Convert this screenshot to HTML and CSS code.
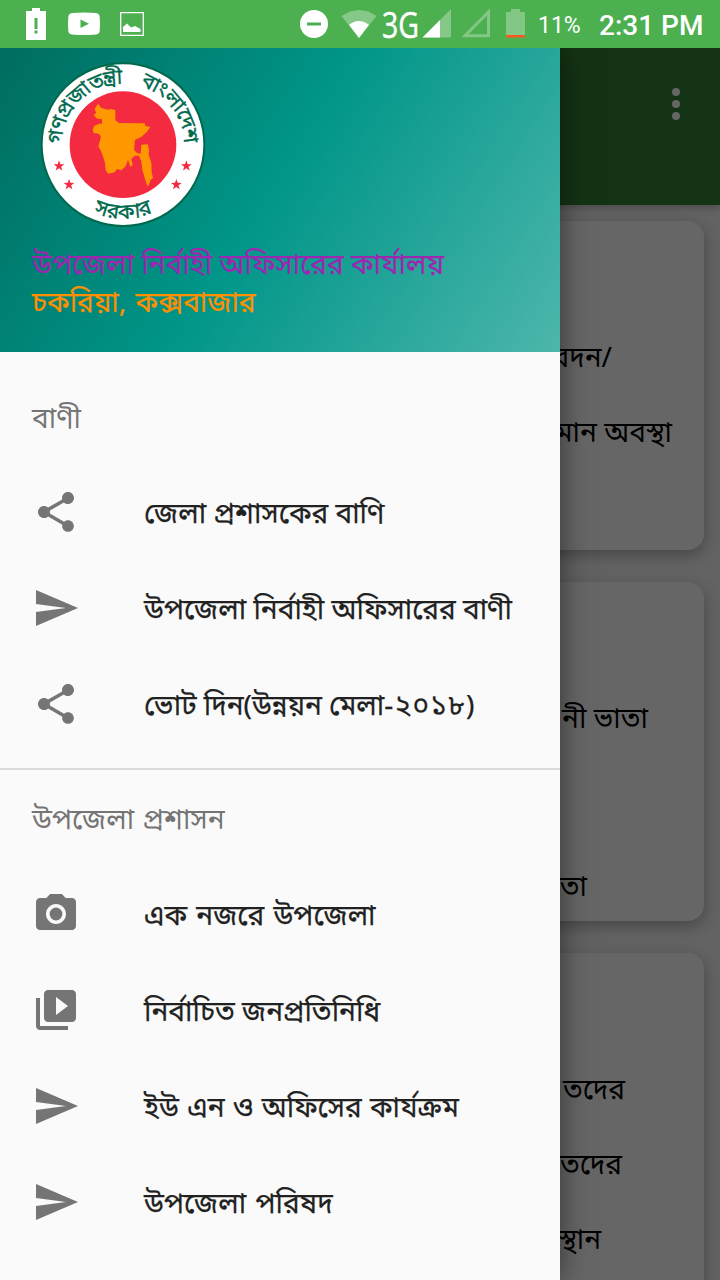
FILE: index.html
```html
<!DOCTYPE html>
<html lang="bn">
<head>
<meta charset="utf-8">
<title>উপজেলা নির্বাহী অফিসারের কার্যালয়</title>
<link rel="stylesheet" href="styles.css">
</head>
<body>
<svg class="defs" aria-hidden="true">
  <symbol id="share" viewBox="0 0 24 24"><path d="M18 16.08c-.76 0-1.44.3-1.96.77L8.91 12.7c.05-.23.09-.46.09-.7s-.04-.47-.09-.7l7.05-4.11c.54.5 1.25.81 2.04.81 1.66 0 3-1.34 3-3s-1.34-3-3-3-3 1.34-3 3c0 .24.04.47.09.7L8.04 9.81C7.5 9.31 6.79 9 6 9c-1.66 0-3 1.34-3 3s1.34 3 3 3c.79 0 1.5-.31 2.04-.81l7.12 4.16c-.05.21-.08.43-.08.65 0 1.61 1.31 2.92 2.92 2.92s2.92-1.31 2.92-2.92-1.31-2.92-2.92-2.92z"/></symbol>
  <symbol id="send" viewBox="0 0 24 24"><path d="M2.01 21L23 12 2.01 3 2 10l15 2-15 2z"/></symbol>
  <symbol id="camera" viewBox="0 0 24 24"><circle cx="12" cy="12" r="3.2"/><path d="M9 2L7.17 4H4c-1.1 0-2 .9-2 2v12c0 1.1.9 2 2 2h16c1.1 0 2-.9 2-2V6c0-1.1-.9-2-2-2h-3.17L15 2H9zm3 15c-2.76 0-5-2.24-5-5s2.24-5 5-5 5 2.24 5 5-2.24 5-5 5z"/></symbol>
  <symbol id="slideshow" viewBox="0 0 24 24"><path d="M4 6H2v14c0 1.1.9 2 2 2h14v-2H4V6zm16-4H8c-1.1 0-2 .9-2 2v12c0 1.1.9 2 2 2h12c1.1 0 2-.9 2-2V4c0-1.1-.9-2-2-2zm-8 12.5v-9l6 4.5-6 4.5z"/></symbol>
  <symbol id="star" viewBox="-10 -10 20 20"><path d="M0-10 2.4-3.2 9.5-3.1 3.8 1.2 5.9 8.1 0 4-5.9 8.1-3.8 1.2-9.5-3.1-2.4-3.2z"/></symbol>
</svg>
<div class="screen">
  <header class="status">
    <svg class="status-icons" width="150" height="48" viewBox="0 0 150 48">
      <path fill="#fff" fill-rule="evenodd" d="M32 8h8v3h6v29H26V11h6zM34.500 18v11h3V18zm0 12.500v3h3v-3z"/>
      <path fill="#fff" fill-rule="evenodd" d="M72 13q12-1 24 0 3.500.5 3.700 4 .6 7 0 14-.3 3-3.700 3.500-12 1-24 0-3.500-.5-3.700-3.500-.6-7 0-14 .3-3.500 3.700-4zm8.500 6.500v8.500l8.500-4.200z"/>
      <path fill="none" stroke="#fff" stroke-width="1.300" d="M120.700 12.700h22.600v22.600h-22.600z"/>
      <path fill="#fff" d="M123 32v-5l4-3.500 4 4 4-1.500 5.500 3v3z"/>
    </svg>
    <div class="status-right">
      <svg width="240" height="48" viewBox="290 0 240 48">
        <circle cx="314" cy="24" r="14" fill="#fff"/><path d="M307 22.500h14v3h-14z" fill="#4caf50"/>
        <path d="M359 38 341.500 16Q359 4 376.500 16z" fill="#fff" opacity=".32"/>
        <path d="M359 38 349 24.800Q359 17 369 24.800z" fill="#fff"/>
        <text class="network" x="382" y="38" textLength="37" lengthAdjust="spacingAndGlyphs">3G</text>
        <path d="M422.500 37.500 451 9v28.500z" fill="#fff" opacity=".32"/><path d="M422.500 37.500 440 20v17.500z" fill="#fff"/>
        <path d="M465 35.700 488.500 12v23.700z" fill="none" stroke="#83c785" stroke-width="3"/>
        <path d="M511 9h9v3h5v25h-19V12h5z" fill="#83c785"/><path d="M506 35h19v2.500h-19z" fill="#ff5722"/>
      </svg>
      <span class="battery">11%</span>
      <span class="clock">2:31 PM</span>
    </div>
  </header>
  <main class="content">
    <div class="appbar">
      <svg width="12" height="34" viewBox="0 0 12 34" fill="#666"><circle cx="6" cy="5" r="4"/><circle cx="6" cy="17" r="4"/><circle cx="6" cy="29" r="4"/></svg>
    </div>
    <div class="cards">
      <section class="card card-a"><p class="end-a1">আবেদন/</p><p class="end-a2">বর্তমান অবস্থা</p></section>
      <section class="card card-b"><p class="end-b1">নী ভাতা</p><p class="end-b2">ভাতা</p></section>
      <section class="card card-c"><p class="end-c1">তদের</p><p class="end-c2">তদের</p><p class="end-c3">স্থান</p></section>
    </div>
  </main>
  <aside class="drawer">
    <div class="profile">
      <svg class="emblem" width="166" height="166" viewBox="31 37 498 498">
        <defs>
          <path id="arc-top" d="M97 285A183 183 0 0 1 463 285"/>
          <path id="arc-bottom" d="M120 439A222 222 0 0 0 440 439"/>
        </defs>
        <circle cx="280" cy="285" r="244" fill="#fff" stroke="#00694d" stroke-width="6"/>
        <circle cx="280" cy="285" r="160" fill="#f42a41"/>
        <path fill="#ff9800" d="M205 162 215 175 235 180 245 178 257 182 257 212 268 220 345 221 347 229 362 232 352 246 335 262 316 270 313 300 322 310 333 312 335 285 354 284 358 300 357 315 365 340 366 368 370 385 363 390 355 411 350 400 345 385 338 360 335 335 327 318 315 318 305 328 309 345 302 352 295 330 288 350 275 362 262 358 255 368 236 372 228 362 226 340 220 320 212 300 206 290 214 262 208 252 192 250 189 240 194 228 208 222 218 222 216 208 202 207 192 196 200 190 195 178z"/>
        <g fill="#f42a41"><use href="#star" x="71" y="332" width="34" height="34"/><use href="#star" x="101" y="388" width="34" height="34"/><use href="#star" x="453" y="332" width="34" height="34"/><use href="#star" x="423" y="388" width="34" height="34"/></g>
        <text class="seal"><textPath href="#arc-top" startOffset="2" textLength="284">গণপ্রজাতন্ত্রী</textPath></text>
        <text class="seal"><textPath href="#arc-top" startOffset="333" textLength="236">বাংলাদেশ</textPath></text>
        <text class="seal" text-anchor="middle"><textPath href="#arc-bottom" startOffset="50%">সরকার</textPath></text>
      </svg>
      <h1 class="office">উপজেলা নির্বাহী অফিসারের কার্যালয়</h1>
      <p class="place">চকরিয়া, কক্সবাজার</p>
    </div>
    <nav class="menu">
      <h2 class="group">বাণী</h2>
      <a class="item"><svg><use href="#share"/></svg><span>জেলা প্রশাসকের বাণি</span></a>
      <a class="item"><svg><use href="#send"/></svg><span>উপজেলা নির্বাহী অফিসারের বাণী</span></a>
      <a class="item"><svg><use href="#share"/></svg><span>ভোট দিন(উন্নয়ন মেলা<b class="year">-২০১৮)</b></span></a>
      <h2 class="group divided">উপজেলা প্রশাসন</h2>
      <a class="item wide"><svg><use href="#camera"/></svg><span>এক নজরে উপজেলা</span></a>
      <a class="item"><svg><use href="#slideshow"/></svg><span>নির্বাচিত জনপ্রতিনিধি</span></a>
      <a class="item roomy"><svg><use href="#send"/></svg><span>ইউ এন ও অফিসের কার্যক্রম</span></a>
      <a class="item wide"><svg><use href="#send"/></svg><span>উপজেলা পরিষদ</span></a>
    </nav>
  </aside>
</div>
</body>
</html>
```
FILE: styles.css
```css
* { box-sizing: border-box; margin: 0; padding: 0; }
body { font-family: "Noto Sans", "Noto Sans Bengali", sans-serif; font-size: 28px; }
.defs { position: absolute; width: 0; height: 0; }
.screen { position: relative; width: 720px; height: 1280px; overflow: hidden; background: #636363; }
.status { position: relative; z-index: 2; height: 48px; display: flex; justify-content: space-between; background: #4caf50; color: #fff; font-family: Roboto, sans-serif; }
.status-right { display: flex; align-items: center; padding-right: 17px; white-space: nowrap; line-height: 48px; }
.network { font-family: "Open Sans", "Noto Sans", sans-serif; font-size: 36px; fill: #fff; stroke: #fff; stroke-width: .5px; }
.battery { width: 69px; padding: 3px 0 0 8px; font-size: 23px; }
.clock { width: 104px; padding-top: 3px; font-size: 28px; font-weight: 500; }
.content { height: 1232px; }
.appbar { position: relative; height: 157px; display: flex; justify-content: flex-end; align-items: flex-start; padding: 39px 38px 0 0; background: #143314; box-shadow: 0 2px 8px rgba(0, 0, 0, .3); }
.cards { display: flex; flex-direction: column; gap: 32px; padding: 16px; }
.card { flex: none; border-radius: 16px; background: #666; color: #000; text-align: right; white-space: nowrap; box-shadow: 0 5px 16px rgba(0, 0, 0, .3); }
.card p { height: 75px; line-height: 75px; }
.card-a { height: 329px; padding-top: 98px; }
.card-b { height: 339px; padding-top: 98px; }
.card-c { height: 360px; padding-top: 98px; }
.end-a1 { padding-right: 92px; }
.end-a2 { padding-right: 32px; }
.end-b1 { padding-right: 56px; }
.card .end-b2 { margin-top: 93px; padding-right: 117px; }
.end-c1 { padding-right: 79px; }
.end-c2 { padding-right: 82px; }
.end-c3 { padding-right: 103px; }
.drawer { position: absolute; top: 48px; left: 0; width: 560px; height: 1232px; background: #fafafa; box-shadow: 0 0 28px rgba(0, 0, 0, .5); }
.profile { height: 304px; padding: 14px 32px 0; background: linear-gradient(122.200deg, #00695c, #009688 50%, #4db6ac) 0 -48px / 560px 352px no-repeat; }
.emblem { display: block; margin-left: 8px; }
.seal { font-size: 63px; fill: #006a4e; stroke: #006a4e; stroke-width: 1px; }
.office, .place { font-size: 28px; font-weight: 400; line-height: 38px; white-space: nowrap; }
.office { margin-top: 16px; color: #9c27b0; -webkit-text-stroke: .2px #9c27b0; }
.place { color: #ff8f00; word-spacing: 2px; -webkit-text-stroke: .2px #ff8f00; }
.menu { padding-top: 16px; }
.group { height: 96px; padding-left: 32px; font-size: 28px; font-weight: 400; line-height: 98px; color: #757575; word-spacing: 1px; }
.divided { height: 98px; margin-top: 16px; border-top: 2px solid #dadada; line-height: 96px; }
.item { height: 96px; display: flex; align-items: center; padding-left: 32px; color: #212121; font-weight: 400; -webkit-text-stroke: .25px #212121; white-space: nowrap; }
.item span { padding-top: 2px; }
.year { font-weight: 400; letter-spacing: 1.300px; }
.wide { word-spacing: 2px; }
.roomy { word-spacing: 1px; }
.item svg { width: 48px; height: 48px; margin-right: 64px; fill: #757575; }
```
